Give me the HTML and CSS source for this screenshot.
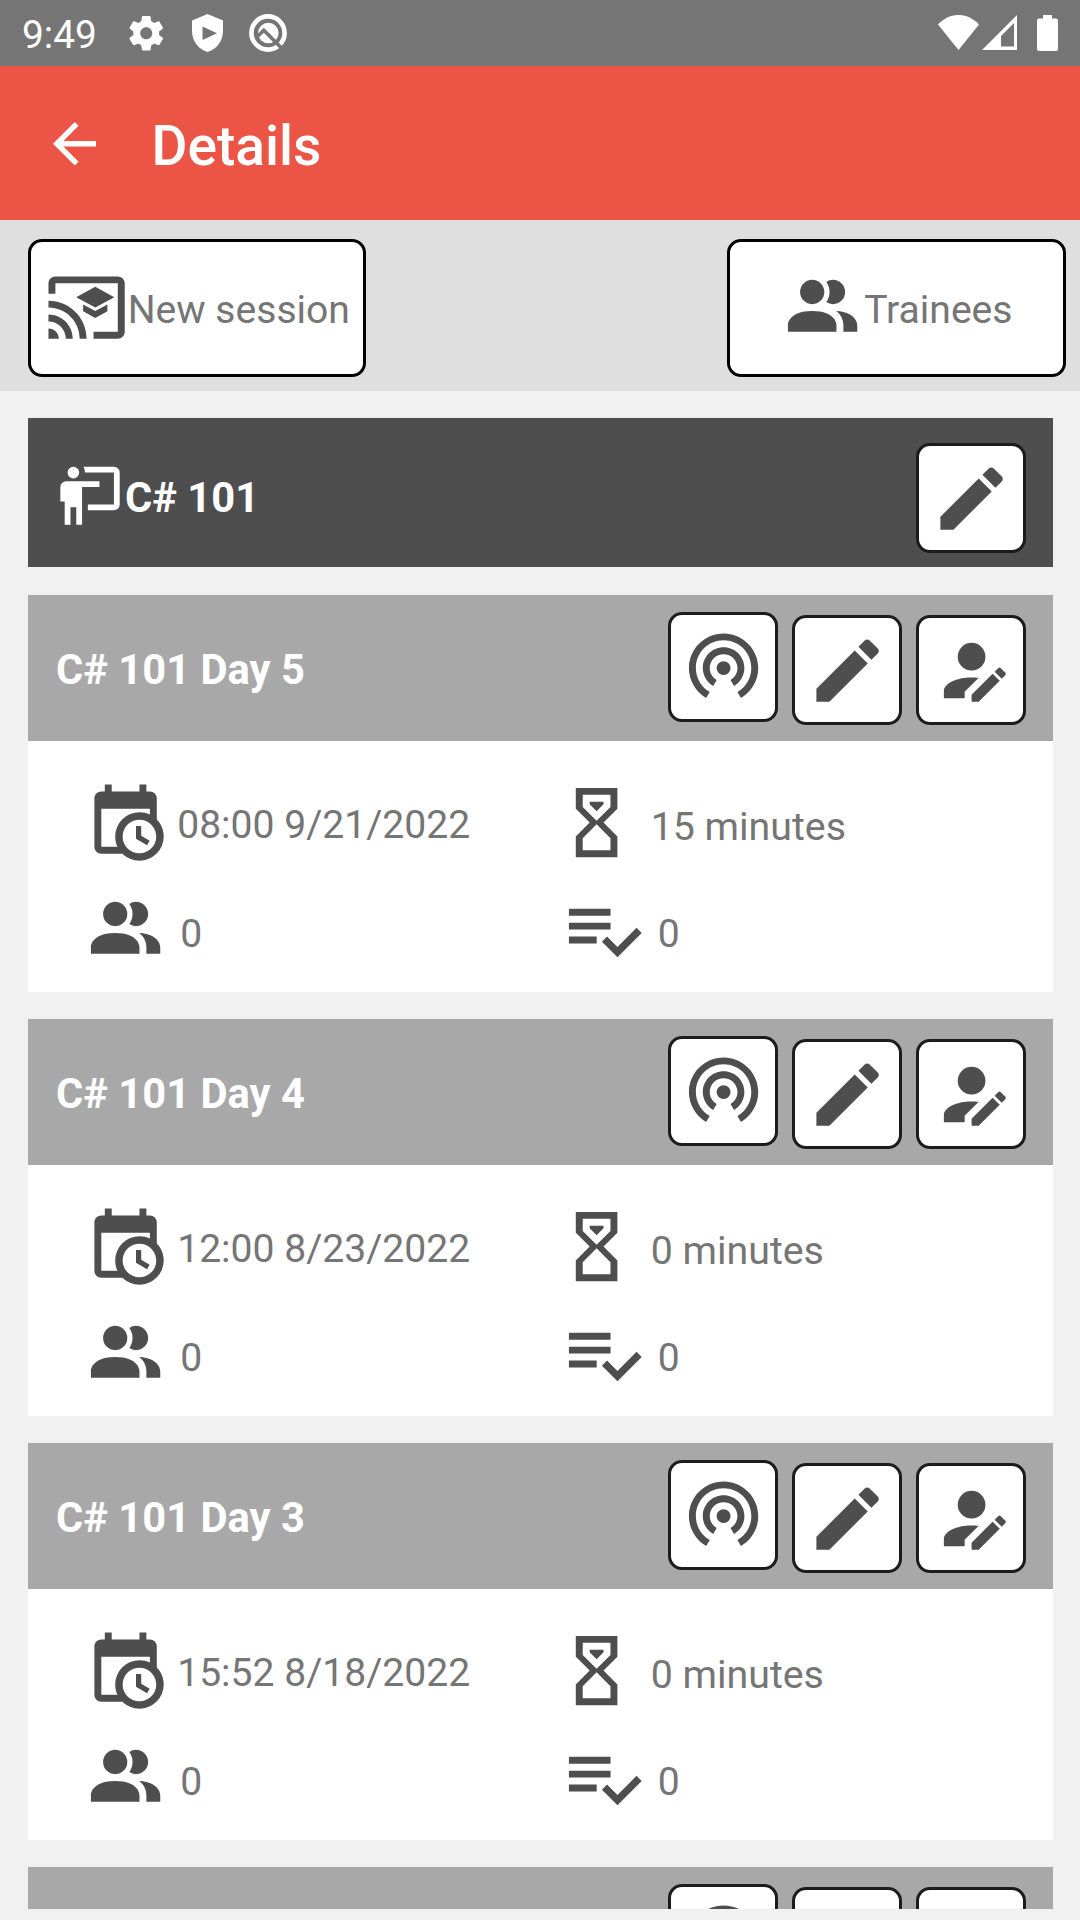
FILE: index.html
```html
<!DOCTYPE html>
<html lang="en">
<head>
<meta charset="utf-8">
<title>Details</title>
<link rel="stylesheet" href="styles.css">
</head>
<body>
<svg class="sprite" aria-hidden="true">
  <symbol id="people" viewBox="0 0 24 24"><path d="M16 17V19H2V17S2 13 9 13 16 17 16 17M12.5 7.5A3.5 3.5 0 1 0 9 11A3.5 3.5 0 0 0 12.5 7.5M15.94 13A5.32 5.32 0 0 1 18 17V19H22V17S22 13.37 15.94 13M15 4A3.39 3.39 0 0 0 13.07 4.59A5 5 0 0 1 13.07 10.41A3.39 3.39 0 0 0 15 11A3.5 3.5 0 0 0 15 4Z"/></symbol>
  <symbol id="cast" viewBox="0 0 24 24"><path d="M21 3H3c-1.100 0-2 .9-2 2v3h2V5h18v14h-7v2h7c1.100 0 2-.9 2-2V5c0-1.100-.9-2-2-2zM1 18v3h3c0-1.660-1.340-3-3-3zm0-4v2c2.760 0 5 2.240 5 5h2c0-3.870-3.130-7-7-7zm0-4v2c4.970 0 9 4.030 9 9h2c0-6.080-4.930-11-11-11zm10 1.090v2L14.500 15l3.500-1.910v-2L14.500 13 11 11.090zM14.500 6L9 9l5.500 3L20 9l-5.500-3z"/></symbol>
  <symbol id="board" viewBox="0 0 24 24"><path d="M20 17A2 2 0 0 0 22 15V4A2 2 0 0 0 20 2H9.460C9.810 2.610 10 3.300 10 4H20V15H11V17M15 7V9H9V22H7V16H5V22H3V14H1.500V9A2 2 0 0 1 3.500 7H15M8 4A2 2 0 0 1 6 6A2 2 0 0 1 4 4A2 2 0 0 1 6 2A2 2 0 0 1 8 4Z"/></symbol>
  <symbol id="pencil" viewBox="0 0 24 24"><path d="M20.710 7.040C21.100 6.650 21.100 6 20.710 5.630L18.370 3.290C18 2.900 17.350 2.900 16.960 3.290L15.120 5.120L18.870 8.870M3 17.250V21H6.750L17.810 9.930L14.060 6.180L3 17.250Z"/></symbol>
  <symbol id="broadcast" viewBox="0 0 24 24"><path d="M12 11c-1.100 0-2 .9-2 2s.9 2 2 2 2-.9 2-2-.9-2-2-2zm6 2c0-3.310-2.690-6-6-6s-6 2.690-6 6c0 2.220 1.210 4.150 3 5.190l1-1.740c-1.190-.7-2-1.970-2-3.450 0-2.210 1.790-4 4-4s4 1.790 4 4c0 1.480-.81 2.750-2 3.450l1 1.740c1.790-1.040 3-2.970 3-5.190zM12 3C6.480 3 2 7.480 2 13c0 3.700 2.010 6.920 4.990 8.650l1-1.730C5.610 18.530 4 15.960 4 13c0-4.420 3.580-8 8-8s8 3.580 8 8c0 2.960-1.610 5.530-4 6.920l1 1.730c2.990-1.730 5-4.950 5-8.650 0-5.520-4.480-10-10-10z"/></symbol>
  <symbol id="person-edit" viewBox="0 0 24 24"><path d="M21.700 13.350L20.700 14.350L18.650 12.300L19.650 11.300C19.860 11.090 20.210 11.090 20.420 11.300L21.700 12.580C21.910 12.790 21.910 13.140 21.700 13.350M12 18.940L18.060 12.880L20.110 14.930L14.060 21H12V18.940M12 14C7.580 14 4 15.790 4 18V20H10V18.110L14 14.110C13.340 14.030 12.670 14 12 14M12 4A4 4 0 0 0 8 8A4 4 0 0 0 12 12A4 4 0 0 0 16 8A4 4 0 0 0 12 4Z"/></symbol>
  <symbol id="calendar" viewBox="0 0 24 24"><path d="M15 13H16.500V15.820L18.940 17.230L18.190 18.530L15 16.690V13M19 8H5V19H9.670C9.240 18.090 9 17.070 9 16A7 7 0 0 1 16 9C17.070 9 18.090 9.240 19 9.670V8M5 21C3.890 21 3 20.100 3 19V5C3 3.890 3.890 3 5 3H6V1H8V3H16V1H18V3H19A2 2 0 0 1 21 5V11.100C22.240 12.360 23 14.090 23 16A7 7 0 0 1 16 23C14.090 23 12.360 22.240 11.100 21H5M16 11.150A4.850 4.850 0 0 0 11.150 16C11.150 18.680 13.320 20.850 16 20.850A4.850 4.850 0 0 0 20.850 16C20.850 13.320 18.680 11.150 16 11.150Z"/></symbol>
  <symbol id="hourglass" viewBox="0 0 24 24"><path fill-rule="evenodd" d="M6 2V8L10 12L6 16V22H18V16L14 12L18 8V2ZM16 16.500V20H8V16.500L12 12.500ZM12 11.500L8 7.500V4H16V7.500ZM10 6V6.700L12 8.700L14 6.700V6Z"/></symbol>
  <symbol id="checklist" viewBox="0 0 24 24"><path d="M14 10H2v2h12v-2zm0-4H2v2h12V6zM2 16h8v-2H2v2zm19.500-4.500L23 13l-6.990 7-4.510-4.500L13 14l3.010 3 5.490-5.500z"/></symbol>
</svg>

<header class="status">
  <span class="clock">9:49</span>
  <svg class="st-gear" viewBox="2 2 20 20"><path d="M19.430 12.980c.04-.32.07-.64.07-.98s-.03-.66-.07-.98l2.110-1.650c.19-.15.24-.42.12-.64l-2-3.460c-.12-.22-.39-.3-.61-.22l-2.490 1c-.52-.4-1.080-.73-1.690-.98l-.38-2.650C14.460 2.180 14.250 2 14 2h-4c-.25 0-.46.18-.49.42l-.38 2.650c-.61.25-1.170.59-1.690.98l-2.490-1c-.23-.09-.49 0-.61.22l-2 3.460c-.13.22-.07.49.12.64l2.110 1.650c-.04.32-.07.65-.07.98s.03.66.07.98l-2.110 1.650c-.19.15-.24.42-.12.64l2 3.460c.12.22.39.3.61.22l2.490-1c.52.4 1.080.73 1.690.98l.38 2.650c.03.24.24.42.49.42h4c.25 0 .46-.18.49-.42l.38-2.650c.61-.25 1.170-.59 1.690-.98l2.490 1c.23.09.49 0 .61-.22l2-3.460c.12-.22.07-.49-.12-.64l-2.110-1.650zM12 15.500c-1.930 0-3.500-1.570-3.500-3.500s1.570-3.500 3.500-3.500 3.500 1.570 3.500 3.500-1.570 3.500-3.500 3.500z"/></svg>
  <svg class="st-shield" viewBox="0 0 31 38"><path fill-rule="evenodd" d="M15.500 0L31 6.500V17C31 27 24.500 35.500 15.500 38C6.500 35.500 0 27 0 17V6.500ZM10.500 12.500V26L25 19.200Z"/></svg>
  <svg class="st-ring" viewBox="0 0 38 38"><circle class="ring" cx="19" cy="19" r="16.600"/><circle cx="19.300" cy="19" r="10.300"/><path class="cut" d="M7.500 23.500L14.800 16.200L34 35.500"/></svg>
  <span class="spacer"></span>
  <svg class="st-wifi" viewBox="0 0 41 35"><path d="M0 9.500C12-3.200 29-3.200 41 9.500L20.500 35Z"/></svg>
  <svg class="st-signal" viewBox="0 0 35 35"><path fill-rule="evenodd" d="M35 0V35H0ZM32 8L19 21V31.500H32Z"/></svg>
  <svg class="st-battery" viewBox="0 0 21 36"><path d="M6 0H15V3.500H19A2 2 0 0 1 21 5.500V34A2 2 0 0 1 19 36H2A2 2 0 0 1 0 34V5.500A2 2 0 0 1 2 3.500H6Z"/></svg>
</header>

<div class="appbar">
  <svg class="back" viewBox="4 4 16 16"><path d="M20 11H7.830l5.590-5.590L12 4l-8 8 8 8 1.410-1.410L7.830 13H20v-2z"/></svg>
  <h1>Details</h1>
</div>

<nav class="actions">
  <button class="action new"><svg class="icon"><use href="#cast"/></svg><span>New session</span></button>
  <button class="action trainees"><svg class="icon"><use href="#people"/></svg><span>Trainees</span></button>
</nav>

<main class="list">
  <section class="course">
    <svg class="board"><use href="#board"/></svg>
    <h2>C# 101</h2>
    <button class="tool"><svg class="icon"><use href="#pencil"/></svg></button>
  </section>

  <article class="session">
    <div class="head"><h2>C# 101 Day 5</h2>
      <button class="tool live"><svg class="icon"><use href="#broadcast"/></svg></button>
      <button class="tool"><svg class="icon"><use href="#pencil"/></svg></button>
      <button class="tool"><svg class="icon"><use href="#person-edit"/></svg></button>
    </div>
    <div class="info">
      <div class="cell date"><svg class="icon"><use href="#calendar"/></svg><span>08:00 9/21/2022</span></div>
      <div class="cell length"><svg class="icon"><use href="#hourglass"/></svg><span>15 minutes</span></div>
      <div class="cell count"><svg class="icon"><use href="#people"/></svg><span>0</span></div>
      <div class="cell checks"><svg class="icon"><use href="#checklist"/></svg><span>0</span></div>
    </div>
  </article>

  <article class="session">
    <div class="head"><h2>C# 101 Day 4</h2>
      <button class="tool live"><svg class="icon"><use href="#broadcast"/></svg></button>
      <button class="tool"><svg class="icon"><use href="#pencil"/></svg></button>
      <button class="tool"><svg class="icon"><use href="#person-edit"/></svg></button>
    </div>
    <div class="info">
      <div class="cell date"><svg class="icon"><use href="#calendar"/></svg><span>12:00 8/23/2022</span></div>
      <div class="cell length"><svg class="icon"><use href="#hourglass"/></svg><span>0 minutes</span></div>
      <div class="cell count"><svg class="icon"><use href="#people"/></svg><span>0</span></div>
      <div class="cell checks"><svg class="icon"><use href="#checklist"/></svg><span>0</span></div>
    </div>
  </article>

  <article class="session">
    <div class="head"><h2>C# 101 Day 3</h2>
      <button class="tool live"><svg class="icon"><use href="#broadcast"/></svg></button>
      <button class="tool"><svg class="icon"><use href="#pencil"/></svg></button>
      <button class="tool"><svg class="icon"><use href="#person-edit"/></svg></button>
    </div>
    <div class="info">
      <div class="cell date"><svg class="icon"><use href="#calendar"/></svg><span>15:52 8/18/2022</span></div>
      <div class="cell length"><svg class="icon"><use href="#hourglass"/></svg><span>0 minutes</span></div>
      <div class="cell count"><svg class="icon"><use href="#people"/></svg><span>0</span></div>
      <div class="cell checks"><svg class="icon"><use href="#checklist"/></svg><span>0</span></div>
    </div>
  </article>

  <article class="session">
    <div class="head"><h2></h2>
      <button class="tool live"><svg class="icon"><use href="#broadcast"/></svg></button>
      <button class="tool"><svg class="icon"></svg></button>
      <button class="tool"><svg class="icon"></svg></button>
    </div>
  </article>
</main>
</body>
</html>
```
FILE: styles.css
```css
* { box-sizing: border-box; }
body {
  margin: 0;
  width: 1080px;
  height: 1920px;
  overflow: hidden;
  background: #f1f1f1;
  font-family: Roboto, sans-serif;
  font-size: 39.100px;
  color: #757575;
}
h1, h2 { margin: 0; color: #fff; }
svg { display: block; flex: none; fill: currentColor; }
.sprite { display: none; }
.icon { width: 83.2px; height: 83.2px; color: #4e4e4e; }
button {
  font: inherit;
  color: inherit;
  background: #fff;
  border: 3px solid #000;
  border-radius: 14px;
  padding: 0;
  display: flex;
  align-items: center;
}

.status {
  height: 66px;
  background: #757575;
  color: #fff;
  display: flex;
  padding: 0 22px 0 22px;
}
.clock { width: 107px; line-height: 70px; font-size: 38.800px; }
.spacer { flex: 1; }
.st-gear { width: 34.500px; height: 34.500px; margin-top: 16px; }
.st-shield { width: 31px; height: 38px; margin: 14px 0 0 28.500px; }
.st-ring { width: 38px; height: 38px; margin: 14px 0 0 26px; }
.ring { fill: none; stroke: currentColor; stroke-width: 4.600; }
.cut { fill: none; stroke: #757575; stroke-width: 3.600; }
.st-wifi { width: 41px; height: 35px; margin-top: 15px; }
.st-signal { width: 35px; height: 35px; margin: 15px 0 0 3px; }
.st-battery { width: 21px; height: 36px; margin: 15px 0 0 20px; }

.appbar {
  height: 154px;
  background: #ec5546;
  color: #fff;
  display: flex;
  align-items: center;
  padding-left: 52.500px;
}
.back { width: 43.500px; height: 43.500px; margin-top: 1px; }
.appbar h1 { margin-left: 55.500px; font-size: 55.100px; font-weight: 500; padding-top: 6px; }

.actions {
  height: 171px;
  background: #dfdfdf;
  display: flex;
  justify-content: space-between;
  padding: 19px 14px 0 28px;
}
.action { height: 138px; }
.new { width: 338px; padding-left: 13.500px; }
.trainees { width: 339px; padding-left: 51px; }
.action span { padding-top: 3px; white-space: nowrap; }

.list {
  height: 1518px;
  overflow: hidden;
  padding: 27px 27px 0 28px;
}
.course {
  height: 149px;
  background: #4e4e4e;
  display: flex;
  align-items: center;
  padding: 0 27px 0 27.500px;
}
.course h2, .head h2 { flex: 1; font-size: 41.700px; font-weight: 700; }
.board { width: 69.500px; height: 69.500px; color: #fff; margin-top: 6px; }
.course h2 { padding-top: 10px; }
.course .tool { margin-top: 11px; }
.head h2 { padding-bottom: 2px; }
.tool {
  width: 110px;
  height: 110px;
  border-color: #1c1c1c;
  justify-content: center;
  padding: 2px 0 0 1px;
}

.session { margin-top: 28px; }
.session + .session { margin-top: 27px; }
.head {
  height: 146px;
  background: #a8a8a8;
  display: flex;
  align-items: center;
  gap: 14px;
  padding: 4px 27px 0 28px;
}
.live { margin-bottom: 6px; padding: 0 0 4px 1px; }
.info {
  height: 251px;
  background: #fff;
  display: grid;
  grid-template-columns: 470.500px 1fr;
  grid-template-rows: 83px 83px;
  row-gap: 24px;
  padding: 40px 0 0 56px;
}
.cell { display: flex; align-items: center; }
.cell span { padding-top: 8px; margin-left: 13px; }
.length span { font-size: 39.300px; }
.date span { padding-top: 4px; margin-left: 10px; }
.checks { padding-left: 7px; }
```
